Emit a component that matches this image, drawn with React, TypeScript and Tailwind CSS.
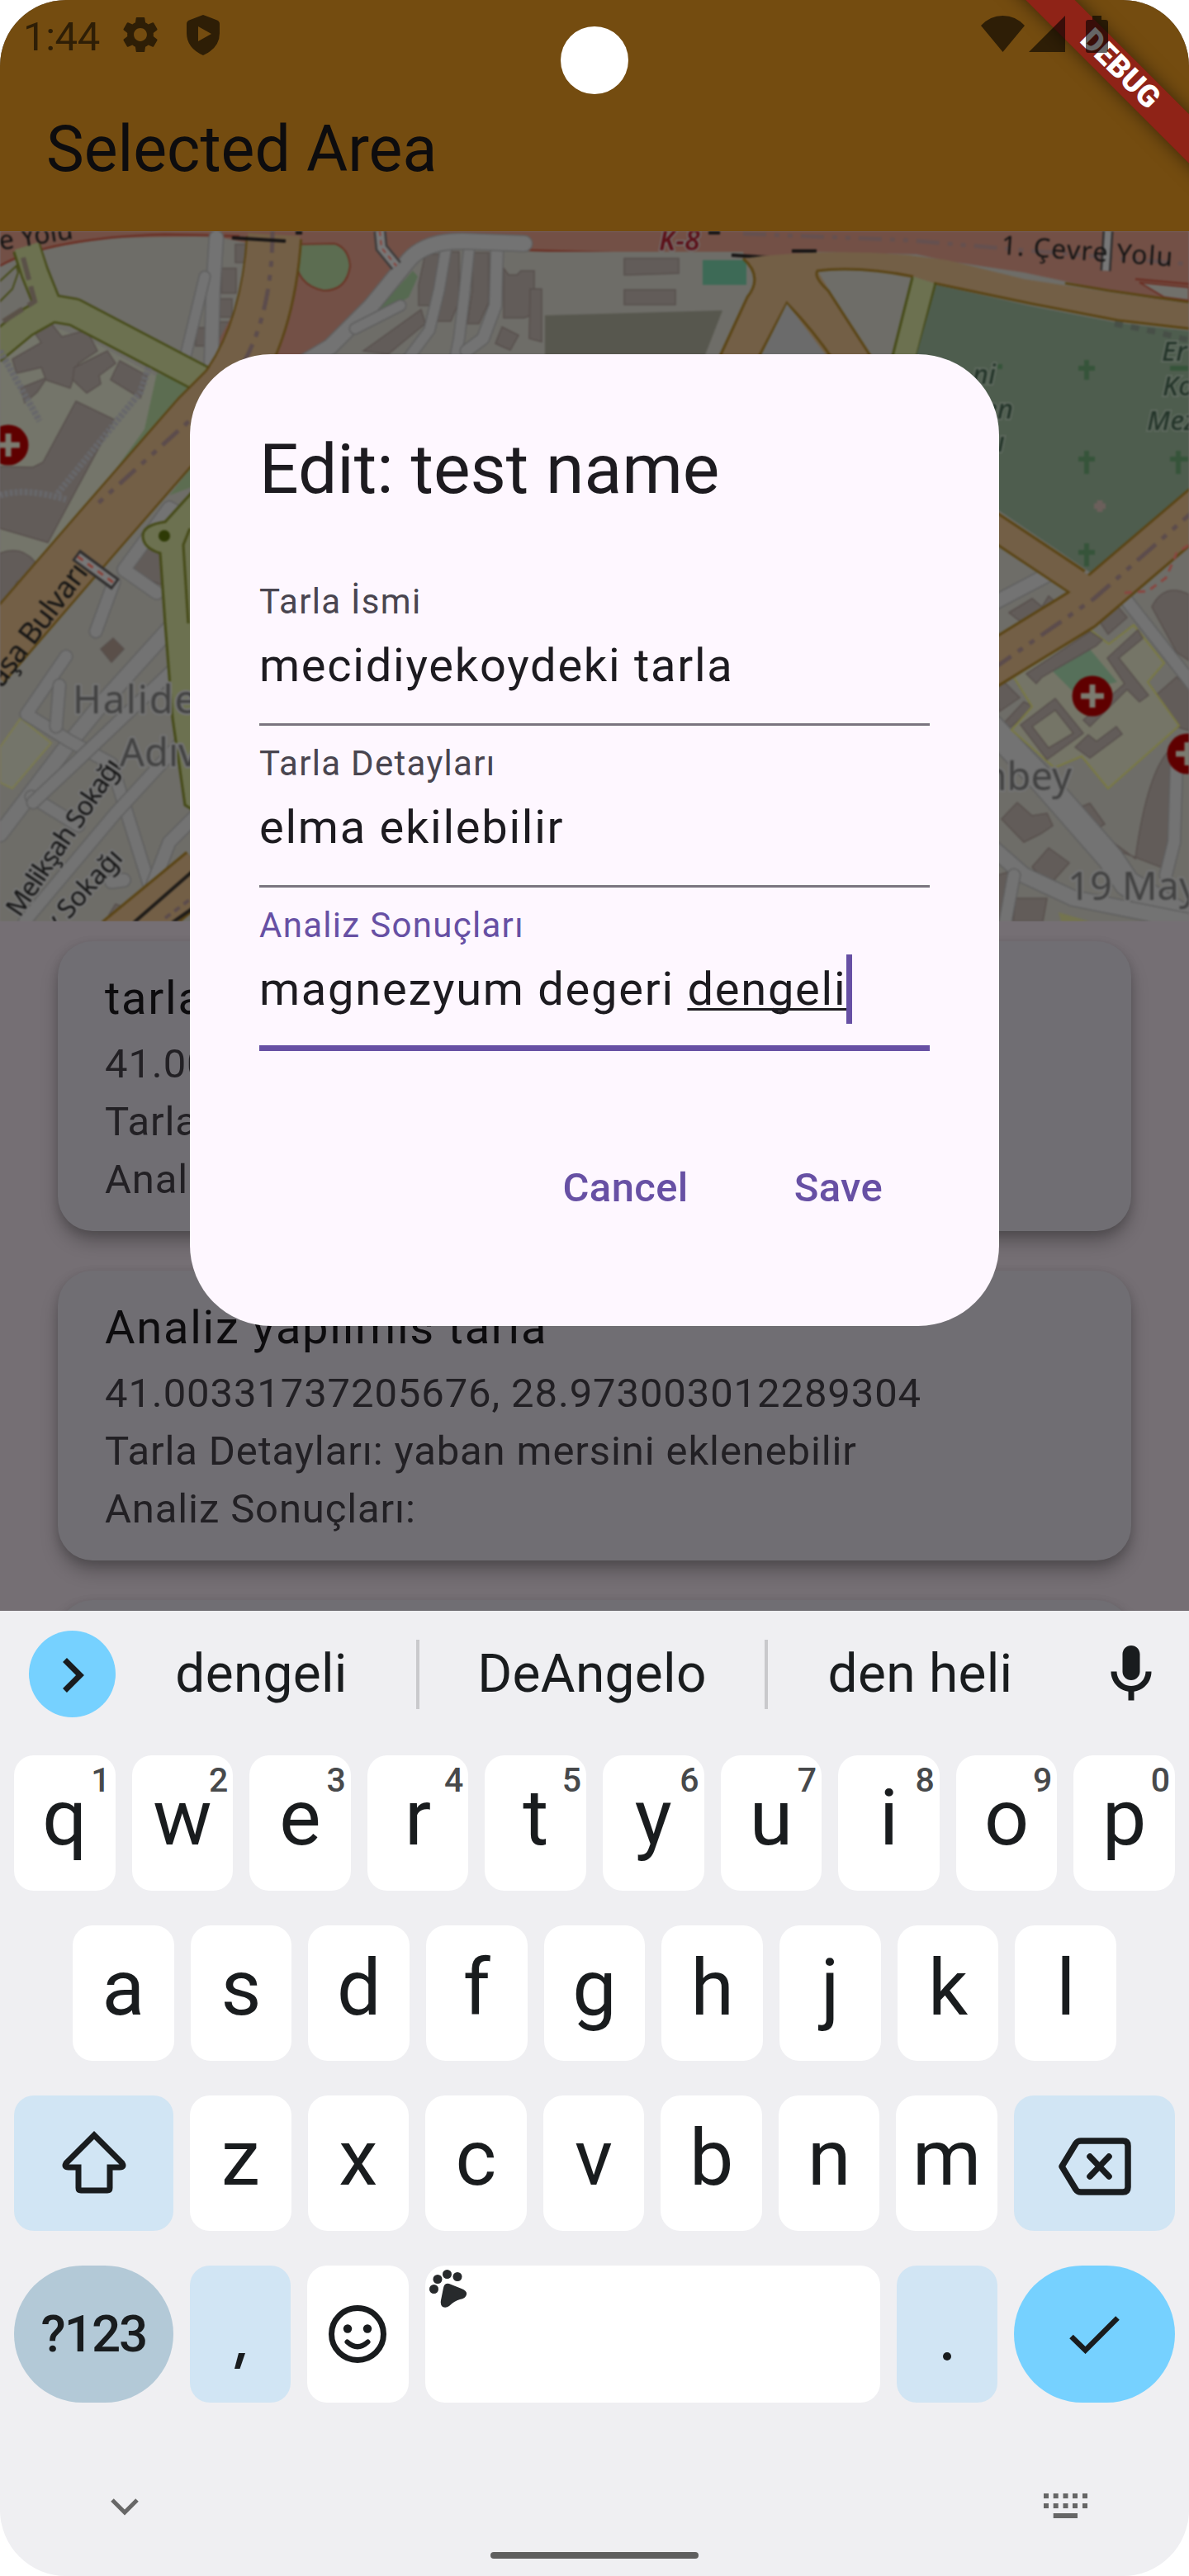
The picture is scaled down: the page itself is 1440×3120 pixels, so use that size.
import React from "react";

const INK = "#191c1e";

function Key({ label, hint }: { label: string; hint?: string }) {
  return (
    <div className="relative h-[164px] min-w-0 flex-1 rounded-[24px] bg-white text-center text-[95px] leading-[151px] text-[#191c1e]">
      {label}
      {hint && (
        <span className="absolute right-[6px] top-[5px] text-[41px] font-medium leading-[50px] text-[#47494b]">
          {hint}
        </span>
      )}
    </div>
  );
}

function Card({ title, lines }: { title: string; lines: string[] }) {
  return (
    <div className="mb-12 h-[351px] shrink-0 rounded-[42px] bg-[#706e73] pl-[57px] pt-[27px] shadow-[0_14px_22px_-2px_rgba(0,0,0,0.28),0_3px_12px_rgba(0,0,0,0.12)]">
      <div className="text-[56px] leading-[84px] tracking-[1.75px] text-[#0d0c0e]">{title}</div>
      <div className="mt-[3px] text-[49px] leading-[70px] tracking-[0.88px] text-[#222024]">
        {lines.map((l) => (
          <div key={l}>{l}</div>
        ))}
      </div>
    </div>
  );
}

function Field({ label, children, focused }: { label: string; children: React.ReactNode; focused?: boolean }) {
  return (
    <div
      className={
        focused
          ? "h-[198px] border-b-[7px] border-[#6750a4] pt-[22px]"
          : "h-[196px] border-b-[3.5px] border-[#7a757f] pt-[22px]"
      }
    >
      <div className={focused ? "text-[42px] leading-[48px] tracking-[1.3px] text-[#6750a4]" : "text-[42px] leading-[48px] tracking-[1.3px] text-[#49454f]"}>
        {label}
      </div>
      <div className="mt-[11px] flex items-center text-[56px] leading-[84px] tracking-[1.75px] text-[#1d1b20]">{children}</div>
    </div>
  );
}

function Road({ d, w = 16 }: { d: string; w?: number }) {
  return (
    <g fill="none" strokeLinejoin="round" strokeLinecap="round">
      <path d={d} stroke="#5e5e5e" strokeWidth={w + 3} />
      <path d={d} stroke="#737373" strokeWidth={w} />
    </g>
  );
}

function Hospital({ x, y }: { x: number; y: number }) {
  return (
    <g>
      <circle cx={x} cy={y} r={24.5} fill="#5f0000" />
      <path d={`M${x - 14} ${y}h28M${x} ${y - 14}v28`} stroke="#7b7b70" strokeWidth={7} />
    </g>
  );
}

function MapView() {
  const b = { fill: "#625c59", stroke: "#574f4c", strokeWidth: 1.5 };
  const halo = { stroke: "#737373", strokeWidth: 5, paintOrder: "stroke" as const, strokeLinejoin: "round" as const };
  return (
    <svg viewBox="0 280 1440 836" className="block h-[836px] w-[1440px] blur-[0.8px]" fontFamily="'Noto Sans', sans-serif">
      <rect x="0" y="280" width="1440" height="836" fill="#6e6d68" />
      {/* campus grounds */}
      <path d="M0 430L55 392L115 415L225 475L110 640L60 700L20 760L0 745Z" fill="#74756a" />
      <path d="M0 905L25 870L62 900L15 955L0 948Z" fill="#74756a" stroke="#7b7b4e" strokeWidth="2" />
      <path d="M190 452L240 470L240 480L135 630L103 620L175 520Z" fill="#5c6d51" />
      <path d="M205 600L232 565L232 590Z" fill="#5c6d51" />
      {/* buildings, left */}
      <g {...b}>
        <path d="M92 486L138 508L58 657L0 640V565L40 566L52 560Z" />
        <path d="M15 435L50 415L40 400L62 392L75 408L105 400L118 425L95 440L85 470L55 460L45 475L30 488L25 470L55 458L50 445L20 452Z" />
        <path d="M90 445L130 425L140 440L120 455L122 465L105 476L88 460Z" />
        <path d="M145 437L178 455L170 482L134 460Z" />
        <path d="M0 670Q25 660 42 680Q38 700 20 705L15 722L0 736Z" />
        <path d="M155 693L210 625L230 640L195 708Z" />
        <path d="M122 786L137 773L150 786L135 802Z" fill="#5a4f49" />
        <path d="M132 1108L140 1095L153 1100L148 1116H130Z" />
        <path d="M285 296h18v22h-18zM268 325h18v30h-18zM266 362h15v22h-15zM266 390h12v22h-12zM237 397h12v22h-12zM225 640h15v40h-15z" />
      </g>
      {/* motorway band */}
      <path d="M0 280H1440V366L1400 362L1343 352L1240 330L1147 316L1110 308L990 305L904 313L790 308L640 303L540 300L500 315L450 375L360 440H250L325 300L260 286L130 288L45 303L0 320Z" fill="#735046" />
      <path d="M0 322Q60 288 200 284L290 286M640 303L800 308M1375 338L1440 344" fill="none" stroke="#6a2f24" strokeWidth="2.5" />
      <path d="M900 283L1000 287L1100 291L1440 320" fill="none" stroke="#65504f" strokeWidth="5" strokeDasharray="28 10 6 10 6 10" />
      <path d="M356 296L405 295Q422 300 424 322Q420 352 392 352Q358 345 358 310Z" fill="#5c6d51" stroke="#6a3324" strokeWidth="2" />
      <path d="M1380 342L1440 348V364L1410 360Z" fill="#71706b" stroke="#6a2f24" strokeWidth="2" />
      {/* streets, upper middle */}
      <path d="M475 429L520 330L640 305H900L910 340L880 440H440Z" fill="#6e6d68" />
      <g {...b}>
        <path d="M515 308h19v32h-6v30h-21v-25z" />
        <path d="M536 305h20v60l-10 24h-16l4-40z" />
        <path d="M572 306h20v60l-12 26h-14l6-40z" />
        <path d="M610 325l6 8h10l5-5h16v52l-12 5h-25z" />
        <path d="M642 350h14v64l-15-4z" />
        <path d="M608 396l20 10-10 18-18-8z" />
        <path d="M440 425L510 375L515 392L470 429Z" />
        <path d="M756 313h66v18l-66 2zM756 351h62v18h-62z" />
      </g>
      <path d="M450 385L480 350L500 328L506 335L495 360Z" fill="#566a51" />
      <path d="M660 382L875 376L850 440H660Z" fill="#57574e" />
      <path d="M851 315H904V345H851Z" fill="#3d6a56" />
      <Road d="M540 302L532 350L520 400L490 440" w={12} />
      <Road d="M568 302L562 360L556 410L550 440" w={12} />
      <Road d="M602 302L600 370L585 410L565 425" w={14} />
      <Road d="M350 450L400 420L450 370L495 315Q515 292 560 292L635 295" w={18} />
      <Road d="M262 288L258 350L256 440" w={16} />
      <Road d="M248 335L225 430" w={12} />
      <Road d="M430 398L485 370" w={12} />
      <path d="M460 280L462 300L480 322" fill="none" stroke="#3c3a3a" strokeWidth="15" />
      <path d="M460 280L462 300L480 322" fill="none" stroke="#777" strokeWidth="10" />
      <path d="M460 280L462 300L480 322" fill="none" stroke="#8a4038" strokeWidth="2" strokeDasharray="6 5" />
      {/* small streets, lower left */}
      <Road d="M0 1010L80 905L125 850L220 745" w={18} />
      <Road d="M80 795L32 865L85 898L135 925L185 1085" w={14} />
      <Road d="M232 885L140 985L30 1116" w={14} />
      <Road d="M38 965L95 1000" w={14} />
      <Road d="M232 790L90 925L40 972" w={14} />
      <Road d="M150 1066L135 1068M178 1090L205 1020L240 985" w={15} />
      <Road d="M72 830L68 880" w={14} />
      <Road d="M138 705L116 765" w={14} />
      <Road d="M150 690L205 615L235 632M150 690L190 718" w={15} />
      {/* pale green roads */}
      <g fill="none" strokeLinejoin="round">
        <path d="M-10 425L30 392L60 375L42 330L32 300M55 372L90 378L250 462" stroke="#454a17" strokeWidth="35" />
        <path d="M-10 425L30 392L60 375L42 330L32 298M55 372L90 378L250 462" stroke="#6c7150" strokeWidth="30" />
      </g>
      <path d="M240 588L200 632Q172 636 173 650Q174 664 194 670L200 755L209 870L224 975L240 985Z" fill="#6c7150" />
      <path d="M240 588L200 632Q172 636 173 650Q174 664 194 670L200 755L209 870L224 975L240 985M230 640L222 660L228 755" fill="none" stroke="#454a17" strokeWidth="3" />
      <circle cx="199" cy="649" r="7" fill="#2e3a05" />
      <path d="M-5 345L20 322L22 330L15 350L-5 370Z" fill="#6e6d68" stroke="#454a17" strokeWidth="2" />
      <path d="M28 312L42 365L-5 395" fill="none" stroke="#5a5148" strokeWidth="6" strokeDasharray="28 8" />
      <path d="M0 425L48 510M180 445L170 475L68 600M0 600Q30 590 80 605" fill="none" stroke="#67676a" strokeWidth="8" strokeDasharray="4 2" />
      {/* boulevard */}
      <g fill="none" strokeLinejoin="round">
        <path d="M332 288Q325 400 275 470L240 505L118 645L-20 805" stroke="#5a4414" strokeWidth="68" />
        <path d="M332 284Q325 400 275 470L240 505L118 645L-20 805" stroke="#735f46" strokeWidth="63" />
        <path d="M330 280Q330 400 275 470L240 500L116 612" stroke="#5c4c4c" strokeWidth="5" strokeDasharray="26 10 7 10 7 10" />
        <path d="M130 1150L245 1055" stroke="#5a4414" strokeWidth="62" />
        <path d="M130 1150L245 1055" stroke="#735f46" strokeWidth="56" />
        <path d="M150 1128L245 1045M205 1120L245 1092" stroke="#1e1b18" strokeWidth="4" />
        <path d="M200 1112L240 1082" stroke="#5c4c4c" strokeWidth="4" strokeDasharray="8 6" />
      </g>
      <path d="M92 672L140 708" stroke="#302e2e" strokeWidth="16" />
      <path d="M94 674L138 706" stroke="#777" strokeWidth="10" />
      <path d="M94 674L138 706" stroke="#8a4038" strokeWidth="3" strokeDasharray="8 7" />
      <path d="M281 288L346 292M886 309L948 313M959 304h30M1110 320h20M358 282h8M858 282h14" stroke="#161414" strokeWidth="4" />
      {/* right-hand interchange */}
      <path d="M900 313Q1000 300 1100 309L1147 315L1240 338L1343 354L1440 368V398L1354 388L1250 368L1131 343L1106 335Q1040 320 990 328L1070 460H1022L953 367L905 460H860L905 360Q925 335 900 313Z" fill="#735f46" />
      <path d="M1440 398L1354 388L1250 368L1131 343M1106 335Q1040 322 990 328Q985 335 1003 352L1060 440M900 313Q925 335 905 360L868 440M915 440L953 367Q985 400 1012 440M1290 343L1343 352L1440 366" fill="none" stroke="#5a4414" strokeWidth="3" />
      <path d="M953 368L1008 440H917Z" fill="#6b6b6b" />
      <path d="M1106 335L1131 343L1108 440H1078Z" fill="#6c7150" />
      <path d="M1105 336L1080 435M1133 343L1108 440" stroke="#454a17" strokeWidth="3" />
      <path d="M1342 280L1339 328" stroke="#2f2d2d" strokeWidth="13" />
      <path d="M1342 280L1339 328" stroke="#777" strokeWidth="8" />
      {/* cemetery */}
      <path d="M1134 345L1250 371L1354 391L1440 401V592L1323 695L1190 605L1090 500Z" fill="#4e5d4e" />
      <g stroke="#36543a" strokeWidth="6">
        <path d="M1306 446h20M1316 436v24M1306 556h20M1316 546v28M1306 669h20M1316 658v28M1417 556h22M1427 546v28M1417 446h22M1208 444h6" />
      </g>
      <path d="M1325 613h14M1332 606v14" stroke="#6b5f5b" strokeWidth="7" />
      <path d="M1350 392L1400 402L1440 412" stroke="#474f47" strokeWidth="7" strokeDasharray="10 10" fill="none" />
      {/* lower right */}
      <Road d="M1195 735L1290 685" w={16} />
      <g {...b}>
        <path d="M1222 742L1250 725L1262 735L1270 722L1285 735L1240 756Z" />
        <path d="M1330 750L1350 730L1365 748L1342 768Z" />
        <path d="M1395 735Q1410 705 1440 720V800L1425 790Z" />
        <path d="M1400 842L1425 820L1440 832V885L1425 880Z" />
        <path d="M1205 815L1235 845L1210 862ZM1212 880L1240 850L1252 856L1225 880Z" />
        <path d="M1213 992L1232 972L1250 988L1268 985L1275 1000L1260 1010L1240 1020Z" />
        <path d="M1250 1050L1270 1027L1295 1045L1270 1073Z" />
        <path d="M1302 980L1320 973L1338 998L1325 1006Z" />
        <path d="M1375 1040Q1390 930 1420 905L1424 920L1420 1040L1405 1050L1340 1025L1345 1018Z" />
        <path d="M1208 1060L1225 1055L1215 1116H1208ZM1230 1088h38l-5 28h-36z" />
      </g>
      <Road d="M1200 880L1262 945L1345 1040L1365 1070L1440 1115" w={30} />
      <Road d="M1200 1025L1240 1060L1300 1088L1440 1116" w={18} />
      <Road d="M1228 1060L1215 1130" w={14} />
      <Road d="M1425 925L1422 1020L1412 1060" w={14} />
      <Road d="M1355 715L1445 830" w={14} />
      <path d="M1227 819L1310 755L1343 780L1373 757L1410 803L1390 826L1428 879L1342 955L1310 916L1277 930L1225 884L1250 856Z" fill="#757567" stroke="#7a7a40" strokeWidth="2" />
      <path d="M1313 778L1353 826L1300 838L1272 810Z" fill="#56705a" />
      <g {...b}>
        <path d="M1243 816L1320 765L1335 775L1328 782L1262 820L1255 828Z" />
        <path d="M1341 797L1378 763L1384 773L1355 797L1391 842L1380 850L1365 835L1320 880L1312 872L1362 828Z" />
        <path fillRule="evenodd" d="M1236 878L1278 846L1312 888L1268 920ZM1250 880L1278 860L1300 888L1270 906Z" />
        <path d="M1302 905L1318 890L1328 898L1352 880L1359 889L1320 918Z" />
      </g>
      <path d="M1282 1105L1320 1116H1285Z" fill="#74744f" />
      <g fill="none" strokeLinejoin="round">
        <path d="M1180 818L1310 738L1460 610" stroke="#5a4414" strokeWidth="55" />
        <path d="M1180 622L1305 705" stroke="#5a4414" strokeWidth="35" />
        <path d="M1180 818L1310 738L1460 610" stroke="#735f46" strokeWidth="49" />
        <path d="M1180 622L1315 712" stroke="#735f46" strokeWidth="29" />
        <path d="M1200 812L1325 725L1450 615" stroke="#5c4c4c" strokeWidth="5" strokeDasharray="30 10 7 10 7 10" />
        <path d="M1362 718L1390 716L1412 700L1425 670L1440 660" stroke="#8a4640" strokeWidth="3" strokeDasharray="9 7" />
      </g>
      <Hospital x={10} y={539} />
      <Hospital x={1323} y={843} />
      <Hospital x={1438} y={913} />
      {/* labels */}
      <g fill="#141414" fontSize="32">
        <text transform="translate(-12 305) rotate(-9)">re Yolu</text>
        <text transform="translate(1212 308) rotate(4)" textLength="208">1. Çevre Yolu</text>
        <text transform="translate(2 834) rotate(-53)" fontSize="36" textLength="176">aşa Bulvarı</text>
        <text transform="translate(24 1112) rotate(-56)" textLength="222" {...halo}>Melikşah Sokağı</text>
        <text transform="translate(150 1040) rotate(-48)" textAnchor="end" {...halo}>ey Sokağı</text>
      </g>
      <text x="798" y="303" fontSize="34" fontWeight="600" fontStyle="italic" fill="#5c1018" {...halo} strokeWidth={3}>K-8</text>
      <g fill="#424242" fontSize="47" {...halo}>
        <text x="88" y="864" textLength="150">Halide</text>
        <text x="145" y="928">Adıv</text>
        <text x="1298" y="957" textAnchor="end">nbey</text>
        <text x="1293" y="1090">19 May</text>
      </g>
      <g fill="#24352a" fontSize="33" fontWeight="500" fontStyle="italic" stroke="#5f6a5f" strokeWidth="4" paintOrder="stroke">
        <text x="1407" y="437">Er</text>
        <text x="1408" y="479">Ko</text>
        <text x="1389" y="521">Mez</text>
        <text x="1206" y="465" textAnchor="end">ni</text>
        <text x="1227" y="507" textAnchor="end">en</text>
        <text x="1217" y="547" textAnchor="end">ı</text>
      </g>
    </svg>
  );
}

function StatusBar() {
  return (
    <div className="absolute inset-x-0 top-0 z-20 flex h-[84px] items-start">
      <div className="ml-[28px] mt-[17px] w-[120px] text-[49px] leading-[56px] tracking-[-0.4px] text-[#2e1e06]">1:44</div>
      <svg viewBox="2 2 20 20" className="mt-5 h-[44px] w-[44px]" fill="#2e1e06">
        <path d="M19.14 12.94c.04-.3.06-.61.06-.94 0-.32-.02-.64-.07-.94l2.03-1.58c.18-.14.23-.41.12-.61l-1.92-3.32c-.12-.22-.37-.29-.59-.22l-2.39.96c-.5-.38-1.03-.7-1.62-.94L14.4 2.81c-.04-.24-.24-.41-.48-.41h-3.84c-.24 0-.43.17-.47.41L9.25 5.35c-.59.24-1.13.57-1.62.94L5.24 5.33c-.22-.08-.47 0-.59.22L2.74 8.87c-.12.21-.08.47.12.61l2.03 1.58c-.05.3-.09.63-.09.94s.02.64.07.94l-2.03 1.58c-.18.14-.23.41-.12.61l1.92 3.32c.12.22.37.29.59.22l2.39-.96c.5.38 1.03.7 1.62.94l.36 2.54c.05.24.24.41.48.41h3.84c.24 0 .44-.17.47-.41l.36-2.54c.59-.24 1.13-.56 1.62-.94l2.39.96c.22.08.47 0 .59-.22l1.92-3.32c.12-.22.07-.47-.12-.61l-2.01-1.58zM12 15.6c-1.98 0-3.6-1.62-3.6-3.6s1.62-3.6 3.6-3.6 3.6 1.62 3.6 3.6-1.62 3.6-3.6 3.6z" />
      </svg>
      <svg viewBox="0 0 40 49" className="ml-[34px] mt-[18px] h-[49px] w-[40px]" fill="#2e1e06">
        <path fillRule="evenodd" d="M20 0L37 6.500Q40 8 40 11V22Q40 40 20 49Q0 40 0 22V11Q0 8 3 6.500ZM14 14V32L30 23Z" />
      </svg>
      <div className="ml-auto mr-[98px] mt-[19px] flex gap-[5px]">
        <svg viewBox="0 0 53 44" className="h-[44px] w-[53px]" fill="#000" fillOpacity="0.6">
          <path d="M26.500 44L0 12Q11 0 26.500 0T53 12Z" />
        </svg>
        <svg viewBox="0 0 44 44" className="h-[44px] w-[44px]" fill="#000" fillOpacity="0.6">
          <path d="M0 44H44V0Z" />
        </svg>
        <svg viewBox="0 0 27 45" className="ml-5 h-[45px] w-[27px]" fill="#000" fillOpacity="0.6">
          <path d="M8 0H19V5H24Q27 5 27 8V42Q27 45 24 45H3Q0 45 0 42V8Q0 5 3 5H8Z" />
        </svg>
      </div>
    </div>
  );
}

function Keyboard() {
  const top = "qwertyuiop".split("");
  return (
    <div className="relative h-[1169px] bg-[#efeff2]">
      <div className="flex h-[153px] items-center text-center text-[64px] leading-[152px] tracking-[0.3px] text-[#191c1e]">
        <div className="w-[129px] shrink-0 pl-[35px]">
          <div className="flex h-[105px] w-[105px] items-center justify-center rounded-full bg-[#76d1ff]">
            <svg viewBox="0 0 26 42" className="ml-[2px] mt-[2px] h-[42px] w-[26px]" fill="none" stroke={INK} strokeWidth="7">
              <path d="M2.500 2.500L21 21L2.500 39.500" />
            </svg>
          </div>
        </div>
        <div className="w-[375px]">dengeli</div>
        <div className="h-[84px] w-1 bg-[#c9c9cc]" />
        <div className="w-[418px]">DeAngelo</div>
        <div className="h-[84px] w-1 bg-[#c9c9cc]" />
        <div className="w-[369px]">den heli</div>
        <svg viewBox="0 0 24 24" className="ml-[29px] h-[84px] w-[84px]" fill={INK}>
          <path d="M12 14c1.660 0 3-1.340 3-3V5c0-1.660-1.340-3-3-3S9 3.340 9 5v6c0 1.660 1.340 3 3 3zM17 11c0 2.760-2.240 5-5 5s-5-2.240-5-5H5c0 3.530 2.610 6.430 6 6.920V21h2v-3.080c3.390-.49 6-3.390 6-6.920h-2z" />
        </svg>
      </div>
      <div className="flex flex-col gap-[42px] px-[17px] pt-[22px]">
        <div className="flex gap-5">
          {top.map((k, i) => (
            <Key key={k} label={k} hint={String((i + 1) % 10)} />
          ))}
        </div>
        <div className="flex gap-5 px-[71px]">
          {"asdfghjkl".split("").map((k) => (
            <Key key={k} label={k} />
          ))}
        </div>
        <div className="flex gap-5">
          <div className="flex h-[164px] w-[193px] items-center justify-center rounded-[24px] bg-[#d1e5f4]">
            <svg viewBox="0 0 78 76" className="-mt-[2px] h-[76px] w-[78px]" fill="none" stroke={INK} strokeWidth="7" strokeLinejoin="round">
              <path d="M39 5L5 39Q2 44 8 44H20V69Q20 72 23 72H55Q58 72 58 69V44H70Q76 44 73 39Z" strokeLinejoin="miter" />
            </svg>
          </div>
          {"zxcvbnm".split("").map((k) => (
            <Key key={k} label={k} />
          ))}
          <div className="flex h-[164px] w-[195px] items-center justify-center rounded-[24px] bg-[#d1e5f4]">
            <svg viewBox="0 0 88 70" className="mt-[7px] h-[70px] w-[88px]" fill="none" stroke={INK} strokeWidth="7.500" strokeLinejoin="round">
              <path d="M4 35L21 7Q23 4 27 4H78Q84 4 84 10V60Q84 66 78 66H27Q23 66 21 63Z" />
              <path d="M38 23L61 47M61 23L38 47" strokeLinecap="round" />
            </svg>
          </div>
        </div>
        <div className="flex gap-5">
          <div className="h-[166px] w-[193px] rounded-full bg-[#b3c9d7] text-center text-[62px] font-medium leading-[165px] tracking-[-2px] text-[#191c1e]">
            ?123
          </div>
          <div className="flex h-[166px] w-[122px] items-end justify-center rounded-[24px] bg-[#d1e5f4] pb-[41px]">
            <svg viewBox="0 0 13 19" className="h-[19px] w-[13px]" fill={INK}>
              <path d="M5 0H13L6.500 19H0Z" />
            </svg>
          </div>
          <div className="flex h-[166px] w-[123px] items-center justify-center rounded-[24px] bg-white">
            <svg viewBox="0 0 70 70" className="h-[70px] w-[70px]" fill="none" stroke={INK} strokeWidth="7">
              <circle cx="35" cy="35" r="31.500" />
              <circle cx="23" cy="28.500" r="5.200" fill={INK} stroke="none" />
              <circle cx="47" cy="28.500" r="5.200" fill={INK} stroke="none" />
              <path d="M22.500 44.500Q35 56 47.500 44.500" strokeWidth="6" strokeLinecap="round" />
            </svg>
          </div>
          <div className="h-[166px] w-[552px] rounded-[24px] bg-white pl-[5px] pt-[5px]">
            <svg viewBox="0 0 46 46" className="h-[46px] w-[46px]" fill="#272a2c">
              <circle cx="5.500" cy="23.500" r="5.500" />
              <circle cx="10" cy="11.500" r="5.500" />
              <circle cx="21.500" cy="5.500" r="5.500" />
              <circle cx="34" cy="8.500" r="5.500" />
              <path d="M17 22Q18 16 24 17L39 23Q46 26 45 30Q44 35 37 36Q30 38 24 44Q20 47 16 45Q13 43 14 37Z" />
            </svg>
          </div>
          <div className="flex h-[166px] w-[122px] items-end justify-center rounded-[24px] bg-[#d1e5f4] pb-[51px]">
            <div className="h-[10px] w-[10px] rounded-full bg-[#191c1e]" />
          </div>
          <div className="flex h-[166px] w-[195px] items-center justify-center rounded-full bg-[#76d1ff]">
            <svg viewBox="0 0 61 46" className="mt-[2px] h-[46px] w-[61px]" fill="none" stroke={INK} strokeWidth="6.500">
              <path d="M2.500 25L19.500 41.500L58.500 2.500" />
            </svg>
          </div>
        </div>
      </div>
      <div className="flex items-center justify-between pl-[134px] pr-[123px] pt-[110px]">
        <svg viewBox="0 0 34 21" className="mt-[3px] h-[21px] w-[34px]" fill="none" stroke="#676767" strokeWidth="5">
          <path d="M2 2L17 17L32 2" />
        </svg>
        <svg viewBox="0 0 53 30" className="h-[30px] w-[53px]" fill="#666">
          <path d="M0 0h6v6H0zM11.700 0h6v6h-6zM23.500 0h6v6h-6zM35 0h6v6h-6zM47 0h6v6h-6zM0 12h6v6H0zM11.700 12h6v6h-6zM23.500 12h6v6h-6zM35 12h6v6h-6zM47 12h6v6h-6zM11.700 24H41v6H11.700z" />
        </svg>
      </div>
      <div className="mx-auto mt-[41px] h-2 w-[252px] rounded-full bg-[#5f5f5f]" />
    </div>
  );
}

export default function App() {
  return (
    <div className="h-[3120px] w-[1440px] bg-white font-['Roboto',sans-serif]">
      <div className="relative h-[3120px] w-[1440px] overflow-hidden rounded-[80px]">
        <div className="relative flex h-[1951px] flex-col overflow-hidden bg-[#756f74]">
          <div className="h-[280px] shrink-0 bg-[#744c10] pl-14 pt-[131px] text-[77px] leading-[100px] text-[#0d0c0e]">
            Selected Area
          </div>
          <div className="h-[836px] shrink-0 overflow-hidden">
            <MapView />
          </div>
          <div className="flex flex-col px-[70px] pt-6">
            <Card title="tarla" lines={["41.00", "Tarla", "Analiz"]} />
            <Card
              title="Analiz yapilmis tarla"
              lines={["41.00331737205676, 28.973003012289304", "Tarla Detayları: yaban mersini eklenebilir", "Analiz Sonuçları:"]}
            />
            <Card title="" lines={[]} />
          </div>

          {/* debug ribbon */}
          <div className="absolute right-0 top-0 h-[280px] w-[280px] overflow-hidden">
            <div className="absolute -left-[54px] top-[63px] h-[42px] w-[500px] rotate-45 bg-[#8f2317] text-center text-[37px] font-black leading-[40px] text-white shadow-[0_0_21px_rgba(0,0,0,0.5)]">
              DEBUG
            </div>
          </div>
          <StatusBar />
          <div className="absolute left-[679px] top-8 z-20 h-[82px] w-[82px] rounded-full bg-white" />

          {/* dialog */}
          <div className="absolute left-[230px] top-[429px] z-30 h-[1177px] w-[980px] rounded-[98px] bg-[#fef7ff] px-[84px] pt-[84px]">
            <div className="mb-[58px] text-[84px] leading-[112px] text-[#1d1b20]">Edit: test name</div>
            <Field label="Tarla İsmi">mecidiyekoydeki tarla</Field>
            <Field label="Tarla Detayları">elma ekilebilir</Field>
            <Field label="Analiz Sonuçları" focused>
              <span>magnezyum degeri&nbsp;</span>
              <span className="underline decoration-[3px] underline-offset-[4px] [text-decoration-skip-ink:none]">dengeli</span>
              <span className="h-[84px] w-[7px] bg-[#6750a4]" />
            </Field>
            <div className="mt-[96px] flex h-[140px] items-center justify-end gap-[128px] pr-[57px] text-[49px] font-medium tracking-[0.35px] text-[#6750a4]">
              <span>Cancel</span>
              <span>Save</span>
            </div>
          </div>
        </div>
        <Keyboard />
      </div>
    </div>
  );
}
